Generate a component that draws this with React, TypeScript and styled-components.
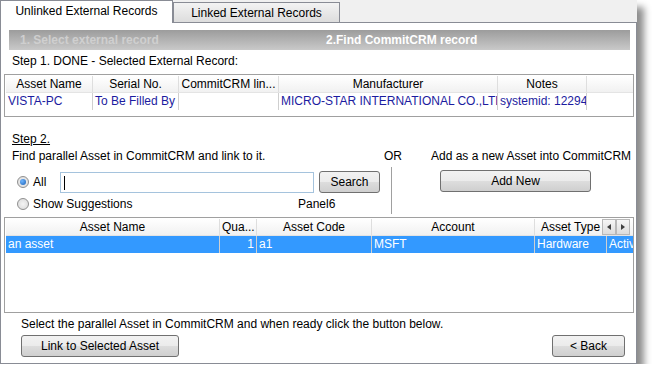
import React from "react";
import styled, { createGlobalStyle } from "styled-components";

const Global = createGlobalStyle`
  html, body { margin: 0; padding: 0; background: #ffffff; }
  body { font-family: "Liberation Sans", Arial, sans-serif; font-size: 12px; color: #000; }
  * { box-sizing: border-box; }
`;

const Window = styled.div`
  width: 637px;
  height: 364px;
  background: #f0f0f0;
  display: flex;
  flex-direction: column;
  box-shadow: 7px 7px 7px rgba(0, 0, 0, 0.45);
`;

const TabStrip = styled.div`
  height: 23px;
  display: flex;
  align-items: flex-end;
  position: relative;
  z-index: 1;
`;

const Tab = styled.div<{ $active?: boolean }>`
  height: ${(p) => (p.$active ? 23 : 21)}px;
  width: ${(p) => (p.$active ? 173 : 167)}px;
  border: 1px solid #898c95;
  border-bottom: ${(p) => (p.$active ? "none" : "1px solid #898c95")};
  background: ${(p) => (p.$active ? "#ffffff" : "linear-gradient(#f3f3f3, #dddddd)")};
  display: flex;
  align-items: center;
  justify-content: center;
  font-size: 12px;
  padding-bottom: ${(p) => (p.$active ? 3 : 0)}px;
`;

const Panel = styled.div`
  flex: 1;
  margin-top: -1px;
  background: #ffffff;
  border: 1px solid #898c95;
  display: flex;
  flex-direction: column;
  padding: 7px 1px 0 3px;
`;

const HeaderBar = styled.div`
  margin: 0 5px 0 5px;
  height: 20px;
  display: grid;
  grid-template-columns: 311px 1fr;
  background: linear-gradient(#9c9c9c, #c9c9c9);
  font-weight: bold;
  font-size: 12px;
  align-items: center;
`;

const HeaderStep = styled.div<{ $done?: boolean }>`
  color: ${(p) => (p.$done ? "#cfcfcf" : "#ffffff")};
  padding-left: ${(p) => (p.$done ? 11 : 6)}px;
`;

const Label = styled.div<{ $mt?: number; $ml?: number; $underline?: boolean }>`
  margin-top: ${(p) => p.$mt ?? 0}px;
  margin-left: ${(p) => p.$ml ?? 0}px;
  line-height: 14px;
  font-size: 12px;
  text-decoration: ${(p) => (p.$underline ? "underline" : "none")};
  white-space: nowrap;
`;

const Table = styled.div<{ $h: number; $mt: number }>`
  margin-top: ${(p) => p.$mt}px;
  width: 630px;
  height: ${(p) => p.$h}px;
  border: 1px solid #a0a0a0;
  padding: 1px 0 0 1px;
  overflow: hidden;
  position: relative;
`;

const Row = styled.div<{ $cols: string; $header?: boolean; $selected?: boolean }>`
  display: grid;
  grid-template-columns: ${(p) => p.$cols};
  height: 17px;
  background: ${(p) =>
    p.$header ? "linear-gradient(#ffffff, #f1f1f1)" : p.$selected ? "#3399ff" : "transparent"};
  color: ${(p) => (p.$selected ? "#ffffff" : p.$header ? "#000" : "#1c1ca0")};
  border-bottom: ${(p) => (p.$header ? "1px solid #e4e4e4" : "none")};
`;

const Cell = styled.div<{ $align?: string; $header?: boolean }>`
  border-right: 1px solid ${(p) => (p.$header ? "#dedede" : "#cfcfcf")};
  padding: 0 2px;
  line-height: 16px;
  white-space: nowrap;
  overflow: hidden;
  text-align: ${(p) => p.$align ?? "left"};
`;

const Step2 = styled.div`
  display: flex;
  margin-top: 15px;
  height: 85px;
`;

const LeftCol = styled.div`
  width: 380px;
  padding-left: 8px;
  display: flex;
  flex-direction: column;
`;

const MidCol = styled.div`
  width: 30px;
  display: flex;
  flex-direction: column;
  align-items: flex-start;
  padding-top: 17px;
`;

const VLine = styled.div`
  width: 1px;
  height: 47px;
  margin-top: 4px;
  margin-left: 7px;
  background: #a0a0a0;
`;

const RightCol = styled.div`
  flex: 1;
  display: flex;
  flex-direction: column;
  align-items: flex-start;
  padding-top: 17px;
  padding-left: 17px;
`;

const ControlRow = styled.div<{ $mt: number }>`
  display: flex;
  align-items: center;
  margin-top: ${(p) => p.$mt}px;
`;

const Radio = styled.span<{ $checked?: boolean }>`
  width: 12px;
  height: 12px;
  border-radius: 50%;
  border: 1px solid #8f8f8f;
  background: radial-gradient(circle, #f4f4f4, #d8d8d8);
  margin-left: 5px;
  margin-right: 4px;
  display: inline-flex;
  align-items: center;
  justify-content: center;
  &::after {
    content: "";
    display: ${(p) => (p.$checked ? "block" : "none")};
    width: 6px;
    height: 6px;
    border-radius: 50%;
    background: radial-gradient(circle at 35% 35%, #6fb6ff, #1a5fb4);
  }
`;

const RadioText = styled.span<{ $w?: number }>`
  width: ${(p) => (p.$w ? `${p.$w}px` : "auto")};
  white-space: nowrap;
`;

const TextInput = styled.div`
  width: 254px;
  height: 21px;
  border: 1px solid #a5c3dd;
  background: #fff;
  padding: 3px 0 0 3px;
`;

const Caret = styled.div`
  width: 1px;
  height: 14px;
  background: #000;
`;

const Button = styled.div<{ $w: number; $ml?: number; $mt?: number }>`
  width: ${(p) => p.$w}px;
  height: 22px;
  margin-left: ${(p) => p.$ml ?? 0}px;
  margin-top: ${(p) => p.$mt ?? 0}px;
  border: 1px solid #707070;
  border-radius: 3px;
  background: linear-gradient(#f2f2f2 0%, #ebebeb 50%, #dddddd 51%, #cfcfcf 100%);
  display: flex;
  align-items: center;
  justify-content: center;
  font-size: 12px;
  color: #000;
  white-space: nowrap;
`;

const ScrollButtons = styled.div`
  position: absolute;
  right: 3px;
  top: 1px;
  display: flex;
`;

const ScrollBtn = styled.div`
  width: 14px;
  height: 16px;
  border: 1px solid #b8b8b8;
  background: linear-gradient(#f6f6f6, #dcdcdc);
  display: flex;
  align-items: center;
  justify-content: center;
`;

const Footer = styled.div`
  display: flex;
  flex-direction: column;
  padding-left: 17px;
`;

const ButtonRow = styled.div`
  display: flex;
  justify-content: space-between;
  margin-top: 4px;
  padding-right: 10px;
`;

const cols1 = "87px 86px 100px 219px 89px";
const cols2 = "214px 37px 115px 163px 72px 40px";

export default function App() {
  return (
    <>
      <Global />
      <Window>
        <TabStrip>
          <Tab $active>Unlinked External Records</Tab>
          <Tab>Linked External Records</Tab>
        </TabStrip>
        <Panel>
          <HeaderBar>
            <HeaderStep $done>1. Select external record</HeaderStep>
            <HeaderStep>2.Find CommitCRM record</HeaderStep>
          </HeaderBar>
          <Label $mt={4} $ml={8}>Step 1. DONE - Selected External Record:</Label>
          <Table $h={43} $mt={6}>
            <Row $cols={cols1} $header>
              <Cell $header $align="center">Asset Name</Cell>
              <Cell $header $align="center">Serial No.</Cell>
              <Cell $header $align="center">CommitCRM lin...</Cell>
              <Cell $header $align="center">Manufacturer</Cell>
              <Cell $header $align="center">Notes</Cell>
            </Row>
            <Row $cols={cols1}>
              <Cell>VISTA-PC</Cell>
              <Cell>To Be Filled By</Cell>
              <Cell></Cell>
              <Cell>MICRO-STAR INTERNATIONAL CO.,LTD</Cell>
              <Cell>systemid: 12294</Cell>
            </Row>
          </Table>
          <Step2>
            <LeftCol>
              <Label $underline>Step 2.</Label>
              <Label $mt={3}>Find parallel Asset in CommitCRM and link to it.</Label>
              <ControlRow $mt={8}>
                <Radio $checked />
                <RadioText $w={27}>All</RadioText>
                <TextInput>
                  <Caret />
                </TextInput>
                <Button $w={61} $ml={5}>Search</Button>
              </ControlRow>
              <ControlRow $mt={4}>
                <Radio />
                <RadioText $w={265}>Show Suggestions</RadioText>
                <RadioText>Panel6</RadioText>
              </ControlRow>
            </LeftCol>
            <MidCol>
              <Label>OR</Label>
              <VLine />
            </MidCol>
            <RightCol>
              <Label>Add as a new Asset into CommitCRM</Label>
              <Button $w={151} $ml={9} $mt={7}>Add New</Button>
            </RightCol>
          </Step2>
          <Table $h={96} $mt={0}>
            <Row $cols={cols2} $header>
              <Cell $header $align="center">Asset Name</Cell>
              <Cell $header $align="center">Qua...</Cell>
              <Cell $header $align="center">Asset Code</Cell>
              <Cell $header $align="center">Account</Cell>
              <Cell $header $align="center">Asset Type</Cell>
              <Cell $header></Cell>
            </Row>
            <Row $cols={cols2} $selected>
              <Cell>an asset</Cell>
              <Cell $align="right">1</Cell>
              <Cell>a1</Cell>
              <Cell>MSFT</Cell>
              <Cell>Hardware</Cell>
              <Cell>Active</Cell>
            </Row>
            <ScrollButtons>
              <ScrollBtn>
                <svg width="4" height="6" viewBox="0 0 4 6"><path d="M4 0 L0 3 L4 6 Z" fill="#404040" /></svg>
              </ScrollBtn>
              <ScrollBtn>
                <svg width="4" height="6" viewBox="0 0 4 6"><path d="M0 0 L4 3 L0 6 Z" fill="#404040" /></svg>
              </ScrollBtn>
            </ScrollButtons>
          </Table>
          <Footer>
            <Label $mt={4}>Select the parallel Asset in CommitCRM and when ready click the button below.</Label>
            <ButtonRow>
              <Button $w={158}>Link to Selected Asset</Button>
              <Button $w={73}>&lt; Back</Button>
            </ButtonRow>
          </Footer>
        </Panel>
      </Window>
    </>
  );
}
